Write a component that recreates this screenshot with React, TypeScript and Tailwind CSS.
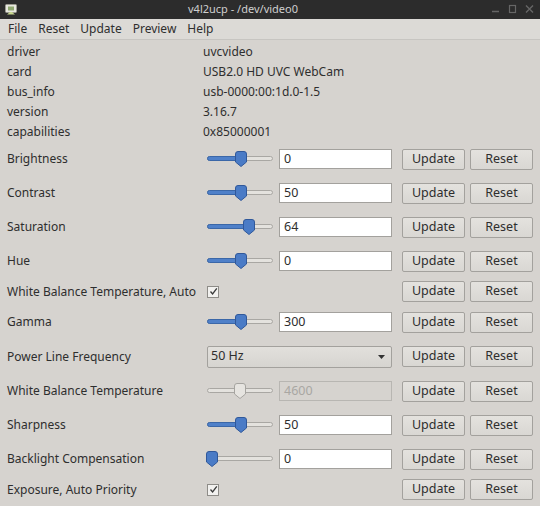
import type { ReactNode } from 'react';

const INFO: [string, string][] = [
  ['driver', 'uvcvideo'],
  ['card', 'USB2.0 HD UVC WebCam'],
  ['bus_info', 'usb-0000:00:1d.0-1.5'],
  ['version', '3.16.7'],
  ['capabilities', '0x85000001'],
];

type Ctrl =
  | { kind: 'slider'; label: string; value: string; pos: number; disabled?: boolean }
  | { kind: 'check'; label: string }
  | { kind: 'menu'; label: string; value: string };

const CONTROLS: Ctrl[] = [
  { kind: 'slider', label: 'Brightness', value: '0', pos: 34 },
  { kind: 'slider', label: 'Contrast', value: '50', pos: 34 },
  { kind: 'slider', label: 'Saturation', value: '64', pos: 42 },
  { kind: 'slider', label: 'Hue', value: '0', pos: 34 },
  { kind: 'check', label: 'White Balance Temperature, Auto' },
  { kind: 'slider', label: 'Gamma', value: '300', pos: 34 },
  { kind: 'menu', label: 'Power Line Frequency', value: '50 Hz' },
  { kind: 'slider', label: 'White Balance Temperature', value: '4600', pos: 33, disabled: true },
  { kind: 'slider', label: 'Sharpness', value: '50', pos: 34 },
  { kind: 'slider', label: 'Backlight Compensation', value: '0', pos: 5 },
  { kind: 'check', label: 'Exposure, Auto Priority' },
];

function Slider({ pos, disabled }: { pos: number; disabled?: boolean }) {
  return (
    <div className="relative h-[16px] w-[66px] shrink-0">
      <div className="absolute left-0 right-0 top-[5px] h-[5px] rounded-full border border-[#a9a7a3] bg-[#e4e2de]" />
      {!disabled && (
        <div
          className="absolute left-0 top-[5px] h-[5px] rounded-full border border-[#3b67a8] bg-[#4f80c9]"
          style={{ width: pos }}
        />
      )}
      <svg
        className="absolute top-0"
        style={{ left: pos - 6 }}
        width="12"
        height="16"
        viewBox="0 0 12 16"
      >
        <path
          d="M3 0.5 H9 A2.5 2.5 0 0 1 11.5 3 V11 L6 15.5 L0.5 11 V3 A2.5 2.5 0 0 1 3 0.5 Z"
          fill={disabled ? '#e6e4e0' : '#4a7bc6'}
          stroke={disabled ? '#a6a4a0' : '#30589a'}
        />
      </svg>
    </div>
  );
}

function Btn({ children }: { children: ReactNode }) {
  return (
    <button className="h-[21px] w-[63px] rounded-[2px] border border-[#a3a19d] bg-[linear-gradient(180deg,#e4e2de,#d9d7d3)] text-[12.5px] leading-none text-[#2e2e2e]">
      {children}
    </button>
  );
}

function Check() {
  return (
    <div className="flex h-[12px] w-[12px] items-center justify-center border border-[#8e8c88] bg-[#f2f1ef]">
      <svg width="9" height="9" viewBox="0 0 9 9">
        <path d="M1.5 4.5 L3.6 7 L7.8 1.3" fill="none" stroke="#3a3a3a" strokeWidth="1.3" />
      </svg>
    </div>
  );
}

function Row({ c }: { c: Ctrl }) {
  let middle: ReactNode = null;
  if (c.kind === 'slider') {
    middle = (
      <div className="flex items-center gap-[6px]">
        <Slider pos={c.pos} disabled={c.disabled} />
        <div
          className={`flex h-[20px] w-[113px] items-center border px-[4px] text-[12.5px] ${
            c.disabled
              ? 'border-[#b8b6b2] bg-[#d6d3cf] text-[#a9a7a3]'
              : 'border-[#a3a19d] bg-white text-[#2e2e2e]'
          }`}
        >
          {c.value}
        </div>
      </div>
    );
  } else if (c.kind === 'check') {
    middle = <Check />;
  } else {
    middle = (
      <div className="flex h-[22px] w-[185px] items-center justify-between rounded-[2px] border border-[#a3a19d] bg-[linear-gradient(180deg,#e2e0dc,#d6d4d0)] pl-[3px] pr-[6px] text-[12.5px]">
        <span>{c.value}</span>
        <svg width="7" height="4" viewBox="0 0 7 4">
          <path d="M0 0 H7 L3.5 4 Z" fill="#333" />
        </svg>
      </div>
    );
  }
  const h = c.kind === 'check' ? 'h-[27px]' : c.kind === 'menu' ? 'h-[35px]' : 'h-[34px]';
  return (
    <div className={`flex items-center ${h}`}>
      <div className="w-[200px] shrink-0 whitespace-nowrap">{c.label}</div>
      <div className="w-[185px] shrink-0">{middle}</div>
      <div className="ml-[10px] flex gap-[5px]">
        <Btn>Update</Btn>
        <Btn>Reset</Btn>
      </div>
    </div>
  );
}

export default function App() {
  return (
    <div
      className="flex h-[506px] w-[540px] flex-col overflow-hidden bg-[#d6d3cf] text-[12px] text-[#2e2e2e]"
      style={{ fontFamily: '"Noto Sans", "Open Sans", sans-serif' }}
    >
      {/* Title bar */}
      <div className="relative flex h-[19px] shrink-0 items-center justify-center bg-[#2c2c2c] pr-[54px] text-[11px] text-[#cfcfcf]">
        <svg className="absolute left-[5px] top-[4px]" width="12" height="11" viewBox="0 0 12 11">
          <rect x="0.5" y="0.5" width="11" height="8" rx="1" fill="#e8e8e0" stroke="#9a9a90" />
          <rect x="3" y="2.5" width="6" height="4" fill="#8fa870" />
          <path d="M2 10.5 L5 8 L7 8 L10 10.5" fill="#c8d890" />
        </svg>
        <span>v4l2ucp - /dev/video0</span>
        <div className="absolute right-[6px] top-[4px] flex items-center gap-[8px]">
          <svg width="9" height="10" viewBox="0 0 9 10">
            <path d="M1 7.5 H8" stroke="#666" strokeWidth="1.5" />
          </svg>
          <svg width="9" height="10" viewBox="0 0 9 10">
            <rect x="1.5" y="1.5" width="6" height="7" fill="none" stroke="#666" strokeWidth="1.2" />
          </svg>
          <svg width="9" height="10" viewBox="0 0 9 10">
            <path d="M1 1.5 L8 8.5 M8 1.5 L1 8.5" stroke="#666" strokeWidth="1.4" />
          </svg>
        </div>
      </div>

      {/* Menu bar */}
      <div className="flex h-[21px] shrink-0 items-center gap-[11px] border-b border-[#c7c5c1] bg-[#dcdad6] pl-[8px] text-[12px]">
        <span>File</span>
        <span>Reset</span>
        <span>Update</span>
        <span>Preview</span>
        <span>Help</span>
      </div>

      {/* Info */}
      <div className="flex flex-col pl-[7px] pt-[2px]">
        {INFO.map(([k, v]) => (
          <div key={k} className="flex h-[20px] items-center">
            <div className="w-[196px] shrink-0">{k}</div>
            <div>{v}</div>
          </div>
        ))}
      </div>

      {/* Controls */}
      <div className="flex flex-col pl-[7px]">
        {CONTROLS.map((c) => (
          <Row key={c.label} c={c} />
        ))}
      </div>
    </div>
  );
}
